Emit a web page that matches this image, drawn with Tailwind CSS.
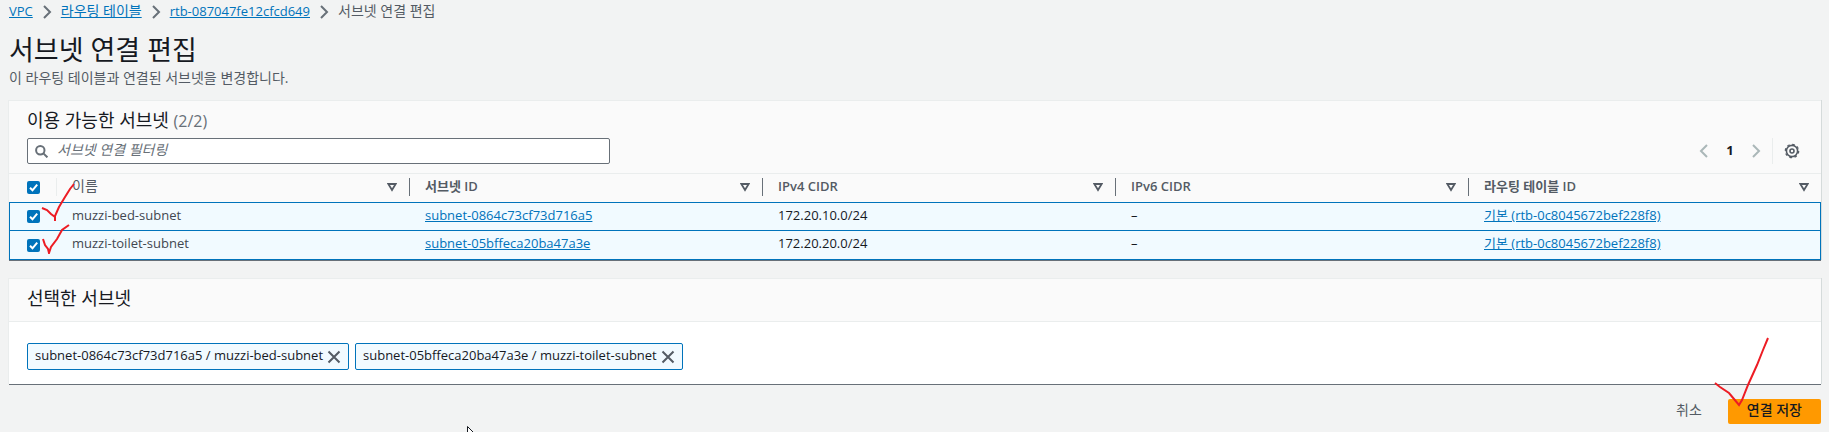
<!DOCTYPE html>
<html lang="ko">
<head>
    <meta charset="UTF-8">
    <meta name="viewport" content="width=device-width, initial-scale=1.0">
    <title>서브넷 연결 편집</title>
    <script src="https://cdn.jsdelivr.net/npm/@tailwindcss/browser@4"></script>
</head>
<body class="relative min-h-screen overflow-hidden bg-[#f2f3f3] pl-[9px] pr-2 font-['Open_Sans','Noto_Sans_CJK_KR',sans-serif] text-[13px] leading-5 text-[#16191f]">
    <!-- shared icons -->
    <svg class="hidden">
        <symbol id="chevron" viewBox="0 0 16 16"><path d="M5 2l6 6-6 6" fill="none" stroke="currentColor" stroke-width="2"/></symbol>
        <symbol id="check" viewBox="0 0 13 13"><path d="M3 6.8l2.5 2.5 4.7-5.6" fill="none" stroke="#fff" stroke-width="2"/></symbol>
        <symbol id="sort" viewBox="0 0 10 10"><path d="M1.3 2h7.4L5 8z" fill="none" stroke="currentColor" stroke-width="1.8"/></symbol>
        <symbol id="close" viewBox="0 0 14 14"><path d="M1.5 1.5l11 11M12.5 1.5l-11 11" fill="none" stroke="currentColor" stroke-width="2"/></symbol>
    </svg>

    <nav class="flex h-6 items-center gap-[6px] text-[#545b64]">
        <a href="#" class="pb-[2px] text-[#0073bb] underline">VPC</a>
        <svg class="size-4 text-[#687078]"><use href="#chevron"/></svg>
        <a href="#" class="pb-[2px] text-sm text-[#0073bb] underline">라우팅 테이블</a>
        <svg class="size-4 text-[#687078]"><use href="#chevron"/></svg>
        <a href="#" class="pb-[2px] text-[#0073bb] underline">rtb-087047fe12cfcd649</a>
        <svg class="size-4 text-[#687078]"><use href="#chevron"/></svg>
        <span class="pb-[2px] text-sm">서브넷 연결 편집</span>
    </nav>

    <header class="pt-2">
        <h1 class="text-[27px] leading-9">서브넷 연결 편집</h1>
        <p class="text-sm text-[#545b64]">이 라우팅 테이블과 연결된 서브넷을 변경합니다.</p>
    </header>

    <main>
        <section class="mt-3 border-t border-[#eaeded] bg-[#fafafa] shadow-[0_1px_0_#687078,1px_0_0_#d5dbdb,-1px_0_0_#eaeded]">
            <div class="px-[18px] pt-[7px]">
                <h2 class="h-6 text-lg leading-6">이용 가능한 서브넷 <span class="text-base text-[#687078]">(2/2)</span></h2>
                <div class="flex items-center justify-between pt-[6px] pb-[9px]">
                    <label class="relative block w-full max-w-[583px]">
                        <svg class="absolute top-[7px] left-2 size-[13px] text-[#687078]" viewBox="0 0 13 13" fill="none" stroke="currentColor" stroke-width="2"><circle cx="5.3" cy="5.3" r="4.2"/><path d="M8.4 8.4l4 4"/></svg>
                        <input type="text" aria-label="서브넷 연결 필터링" placeholder="서브넷 연결 필터링" class="block h-[26px] w-full rounded-xs border border-[#687078] bg-white pr-2 pb-[3px] pl-[29px] text-sm placeholder:text-[#687078] placeholder:italic">
                    </label>
                    <div class="flex items-center pr-[3px]">
                        <button type="button" aria-label="이전" class="text-[#aab7b8]"><svg class="size-4 rotate-180"><use href="#chevron"/></svg></button>
                        <span class="w-9 pb-[3px] text-center font-bold">1</span>
                        <button type="button" aria-label="다음" class="text-[#aab7b8]"><svg class="size-4"><use href="#chevron"/></svg></button>
                        <span class="ml-2 h-[26px] w-3 border-l border-[#eaeded]"></span>
                        <button type="button" aria-label="설정" class="text-[#545b64]">
                            <svg class="size-4" viewBox="0 0 16 16" fill="none" stroke="currentColor"><circle cx="8" cy="8" r="5.6" stroke-width="1.6"/><circle cx="8" cy="8" r="6.7" stroke-width="1.2" stroke-dasharray="2.6 2.66"/><circle cx="8" cy="8" r="2" stroke-width="1.6"/></svg>
                        </button>
                    </div>
                </div>
            </div>

            <table class="w-full table-fixed border-separate border-spacing-0 border-t border-[#eaeded] text-left">
                <colgroup><col class="w-[47px]"><col><col><col><col><col></colgroup>
                <thead class="text-[#545b64]">
                    <tr class="h-7">
                        <th class="pb-[2px] pl-[18px]">
                            <span class="grid size-[13px]"><input type="checkbox" checked aria-label="모두 선택" class="col-start-1 row-start-1 size-[13px] appearance-none rounded-xs bg-[#0073bb]"><svg class="pointer-events-none col-start-1 row-start-1 size-[13px]"><use href="#check"/></svg></span>
                        </th>
                        <th class="pb-[2px] font-semibold"><div class="flex h-[18px] items-center justify-between border-l border-[#eaeded] pr-3 pl-[15px]"><span class="pb-[2px] text-sm font-normal">이름</span><svg class="size-[10px]"><use href="#sort"/></svg></div></th>
                        <th class="pb-[2px] font-semibold"><div class="flex h-[18px] items-center justify-between border-l border-[#687078] pr-3 pl-[15px]"><span class="pb-[2px]">서브넷 ID</span><svg class="size-[10px]"><use href="#sort"/></svg></div></th>
                        <th class="pb-[2px] font-semibold"><div class="flex h-[18px] items-center justify-between border-l border-[#687078] pr-3 pl-[15px]"><span class="pb-[2px]">IPv4 CIDR</span><svg class="size-[10px]"><use href="#sort"/></svg></div></th>
                        <th class="pb-[2px] font-semibold"><div class="flex h-[18px] items-center justify-between border-l border-[#687078] pr-3 pl-[15px]"><span class="pb-[2px]">IPv6 CIDR</span><svg class="size-[10px]"><use href="#sort"/></svg></div></th>
                        <th class="pb-[2px] font-semibold"><div class="flex h-[18px] items-center justify-between border-l border-[#687078] pr-3 pl-[15px]"><span class="pb-[2px]">라우팅 테이블 ID</span><svg class="size-[10px]"><use href="#sort"/></svg></div></th>
                    </tr>
                </thead>
                <tbody class="bg-[#f1faff]">
                    <tr class="h-[29px]">
                        <td class="border-y border-l border-[#0073bb] pl-[17px]">
                            <span class="grid size-[13px]"><input type="checkbox" checked aria-label="muzzi-bed-subnet" class="col-start-1 row-start-1 size-[13px] appearance-none rounded-xs bg-[#0073bb]"><svg class="pointer-events-none col-start-1 row-start-1 size-[13px]"><use href="#check"/></svg></span>
                        </td>
                        <td class="border-y border-[#0073bb] pb-1 pl-4 text-[#414750]">muzzi-bed-subnet</td>
                        <td class="border-y border-[#0073bb] pb-1 pl-4"><a href="#" class="text-[#0073bb] underline">subnet-0864c73cf73d716a5</a></td>
                        <td class="border-y border-[#0073bb] pb-1 pl-4">172.20.10.0/24</td>
                        <td class="border-y border-[#0073bb] pb-1 pl-4">–</td>
                        <td class="border-y border-r border-[#0073bb] pb-1 pl-4"><a href="#" class="text-[#0073bb] underline">기본 (rtb-0c8045672bef228f8)</a></td>
                    </tr>
                    <tr class="h-[29px]">
                        <td class="border-b border-l border-[#0073bb] pl-[17px]">
                            <span class="grid size-[13px]"><input type="checkbox" checked aria-label="muzzi-toilet-subnet" class="col-start-1 row-start-1 size-[13px] appearance-none rounded-xs bg-[#0073bb]"><svg class="pointer-events-none col-start-1 row-start-1 size-[13px]"><use href="#check"/></svg></span>
                        </td>
                        <td class="border-b border-[#0073bb] pb-1 pl-4 text-[#414750]">muzzi-toilet-subnet</td>
                        <td class="border-b border-[#0073bb] pb-1 pl-4"><a href="#" class="text-[#0073bb] underline">subnet-05bffeca20ba47a3e</a></td>
                        <td class="border-b border-[#0073bb] pb-1 pl-4">172.20.20.0/24</td>
                        <td class="border-b border-[#0073bb] pb-1 pl-4">–</td>
                        <td class="border-r border-b border-[#0073bb] pb-1 pl-4"><a href="#" class="text-[#0073bb] underline">기본 (rtb-0c8045672bef228f8)</a></td>
                    </tr>
                </tbody>
            </table>
        </section>

        <section class="mt-[18px] border-t border-[#eaeded] bg-white shadow-[0_1px_0_#687078,1px_0_0_#d5dbdb,-1px_0_0_#eaeded]">
            <h2 class="border-b border-[#eaeded] bg-[#fafafa] px-[18px] pt-[7px] pb-[11px] text-lg leading-6">선택한 서브넷</h2>
            <div class="flex gap-[6px] px-[18px] pt-[21px] pb-[14px]">
                <span class="flex h-[27px] items-center gap-1 rounded-xs border border-[#0073bb] bg-[#f1faff] px-[7px]">
                    <span class="pb-1">subnet-0864c73cf73d716a5 / muzzi-bed-subnet</span>
                    <button type="button" aria-label="제거" class="text-[#545b64]"><svg class="size-[14px]"><use href="#close"/></svg></button>
                </span>
                <span class="flex h-[27px] items-center gap-1 rounded-xs border border-[#0073bb] bg-[#f1faff] px-[7px]">
                    <span class="pb-1">subnet-05bffeca20ba47a3e / muzzi-toilet-subnet</span>
                    <button type="button" aria-label="제거" class="text-[#545b64]"><svg class="size-[14px]"><use href="#close"/></svg></button>
                </span>
            </div>
        </section>
    </main>

    <footer class="mt-[15px] flex justify-end gap-[6px] text-sm">
        <button type="button" class="h-[25px] px-5 pb-1 text-[#545b64]">취소</button>
        <button type="button" class="relative h-[25px] rounded-xs bg-[#ff9900] px-[19px] pb-1 font-medium">연결 저장
            <svg class="absolute bottom-4 -left-[14px] h-[72px] w-[58px]" viewBox="0 0 58 72" fill="none" stroke="#ed1c24" stroke-width="2"><path d="M1 47l5 4 9 6 5 6 5 6 3-5 6-15 9-20 6-15 5-12"/></svg>
        </button>
    </footer>

    <!-- pen marks next to the row checkboxes -->
    <svg class="pointer-events-none absolute top-[182px] left-[40px] h-[72px] w-[36px]" viewBox="0 0 36 72" fill="none" stroke="#ed1c24" stroke-width="2">
        <path d="M2 26l5 2 4 4 4 3v4-5l4-9 6-10 5-8 4-5"/>
        <path d="M3 57l2 6 3 4 1 4 2-6 6-8 5-9 7-5"/>
    </svg>

    <!-- mouse pointer -->
    <svg class="pointer-events-none absolute top-[426px] left-[467px] h-[6px] w-[8px]" viewBox="0 0 8 6"><path d="M.5 8V.5L8 8" fill="#fff" stroke="#16191f"/></svg>
</body>
</html>
